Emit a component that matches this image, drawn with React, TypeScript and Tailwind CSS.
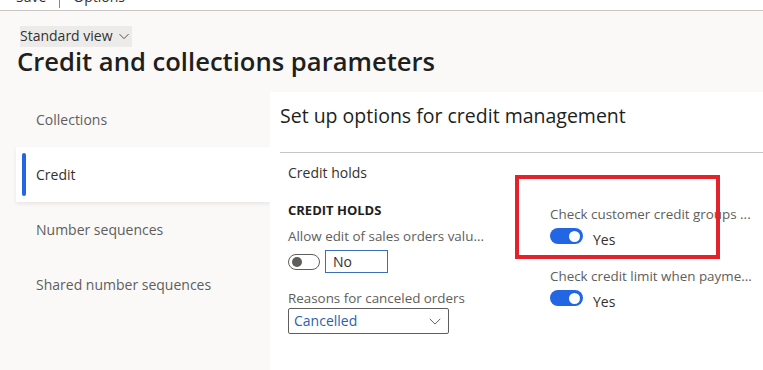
import React from 'react';

const font = { fontFamily: '"Open Sans", "Noto Sans", sans-serif' };

type ToggleProps = { on: boolean };

const Toggle: React.FC<ToggleProps> = ({ on }) =>
  on ? (
    <span className="flex h-[16px] w-[33px] shrink-0 items-center justify-end rounded-full bg-[#2266e3] pr-[3px]">
      <span className="h-[11px] w-[11px] rounded-full bg-white" />
    </span>
  ) : (
    <span className="flex h-[16px] w-[32px] shrink-0 items-center rounded-full border border-[#605e5c] bg-white pl-[3px]">
      <span className="h-[10px] w-[10px] rounded-full bg-[#605e5c]" />
    </span>
  );

const Chevron: React.FC<{ className?: string }> = ({ className }) => (
  <svg viewBox="0 0 16 16" className={className} fill="none" stroke="currentColor" strokeWidth={1.1}>
    <path d="M2 5.5l6 6 6-6" />
  </svg>
);

const navItems = ['Collections', 'Credit', 'Number sequences', 'Shared number sequences'];

export default function App() {
  return (
    <div className="relative h-[370px] w-[763px] overflow-hidden bg-[#faf9f8] text-[#323130]" style={font}>
      {/* cut-off command bar */}
      <div className="h-[11px] overflow-hidden border-b border-[#c8c6c4] bg-white">
        <div className="-mt-[14px] flex items-center pl-[16px] text-[14px] leading-[20px] text-[#323130]">
          <span>Save</span>
          <span className="mx-[13px] h-[22px] w-px bg-[#8a8886]" />
          <span>Options</span>
        </div>
      </div>

      {/* page header */}
      <div className="pl-[17px] pt-[12px]">
        <div className="ml-[3px] inline-flex h-[21px] items-center gap-[5px] bg-[#edebe9] pr-[2px] text-[14px] leading-[20px] text-[#323130]">
          <span>Standard view</span>
          <Chevron className="h-[12px] w-[12px] text-[#323130]" />
        </div>
        <h1 className="text-[25.6px] font-semibold leading-[30px] text-[#201f1e]">
          Credit and collections parameters
        </h1>
      </div>

      <div className="mt-[15px] flex">
        {/* left nav */}
        <nav className="ml-[16px] w-[254px] shrink-0">
          {navItems.map(item => {
            const active = item === 'Credit';
            return (
              <div
                key={item}
                className={`flex h-[55px] items-center ${
                  active ? 'bg-white shadow-[0_2px_4px_rgba(0,0,0,0.08)]' : ''
                }`}
              >
                <span className={`ml-[6px] h-[43px] w-[4px] rounded-full ${active ? 'bg-[#2266e3]' : ''}`} />
                <span
                  className={`ml-[10px] text-[14px] leading-[20px] ${
                    active ? 'text-[#323130]' : 'text-[#605e5c]'
                  }`}
                >
                  {item}
                </span>
              </div>
            );
          })}
        </nav>

        {/* content panel */}
        <section className="h-[280px] flex-1 bg-white">
          <div className="ml-[10px] h-[61px] border-b border-[#c8c6c4] pt-[12px]">
            <h2 className="text-[19.5px] font-normal leading-[24px] text-[#201f1e]">
              Set up options for credit management
            </h2>
          </div>

          <div className="pl-[18px]">
            <div className="mt-[10px] text-[14px] leading-[20px] text-[#323130]">Credit holds</div>

            <div className="mt-[17px] flex">
              <div className="w-[262px] shrink-0">
                <div className="text-[13px] font-bold leading-[20px] text-[#201f1e]">CREDIT HOLDS</div>
                <div className="mt-[6px] text-[13.4px] leading-[20px] text-[#605e5c]">
                  Allow edit of sales orders valu...
                </div>
                <div className="mt-[4px] flex h-[23px] items-center">
                  <Toggle on={false} />
                  <div className="ml-[5px] flex h-[23px] w-[63px] items-center border border-[#3d6fb6] px-[7px] text-[14px] text-[#323130]">
                    No
                  </div>
                </div>
                <div className="mt-[15px] text-[13.4px] leading-[20px] text-[#605e5c]">
                  Reasons for canceled orders
                </div>
                <div className="flex h-[26px] w-[161px] items-center justify-between rounded-[2px] border border-[#605e5c] pl-[5px] pr-[6px]">
                  <span className="text-[14px] leading-[20px] text-[#2b5fb3]">Cancelled</span>
                  <Chevron className="h-[14px] w-[14px] text-[#605e5c]" />
                </div>
              </div>

              <div className="pt-[4px]">
                <div className="text-[13.4px] leading-[20px] text-[#605e5c]">Check customer credit groups ...</div>
                <div className="mt-[4px] flex h-[24px] items-start">
                  <Toggle on />
                  <span className="ml-[10px] mt-[2px] text-[14px] leading-[20px] text-[#323130]">Yes</span>
                </div>
                <div className="mt-[14px] text-[13.4px] leading-[20px] text-[#605e5c]">
                  Check credit limit when payme...
                </div>
                <div className="mt-[4px] flex h-[24px] items-start">
                  <Toggle on />
                  <span className="ml-[10px] mt-[2px] text-[14px] leading-[20px] text-[#323130]">Yes</span>
                </div>
              </div>
            </div>
          </div>
        </section>
      </div>

      {/* red annotation box */}
      <div className="absolute left-[515px] top-[175px] h-[84px] w-[205px] border-[4px] border-[#e3222b]" />
    </div>
  );
}
